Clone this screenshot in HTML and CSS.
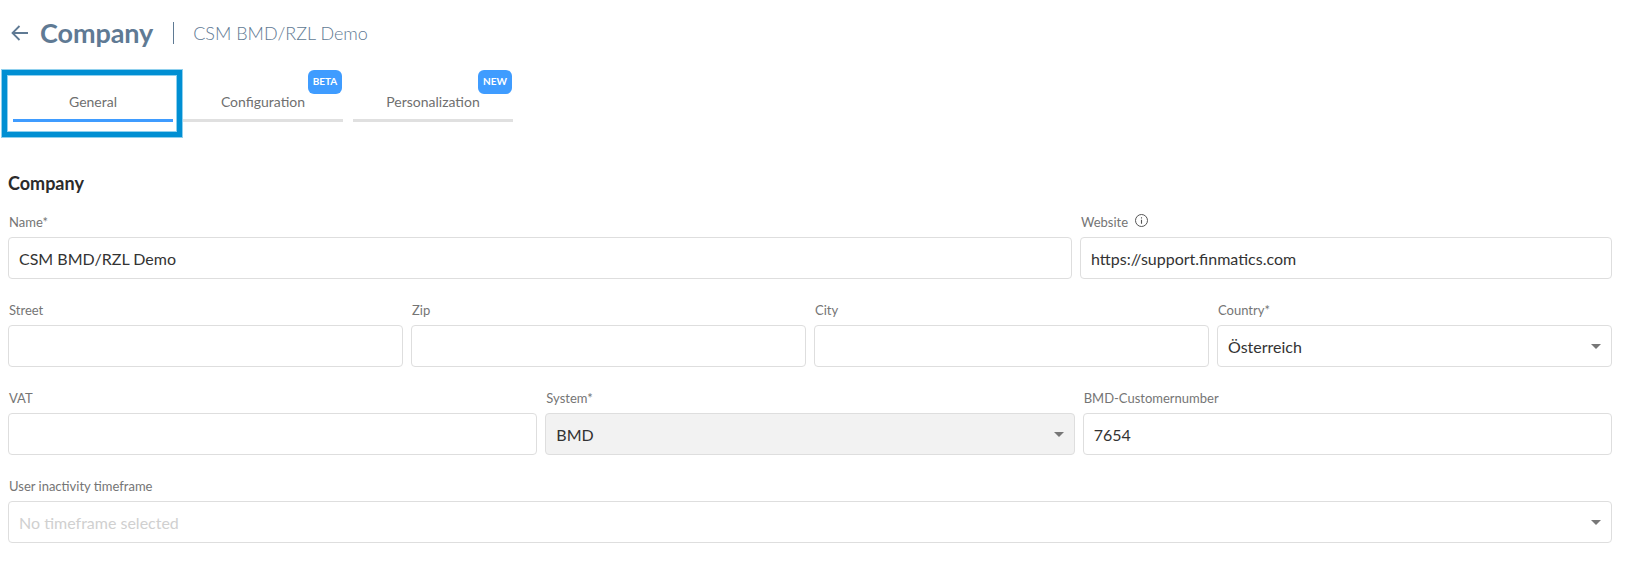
FILE: index.html
```html
<!DOCTYPE html>
<html lang="en">
<head>
<meta charset="utf-8">
<title>Company</title>
<link rel="stylesheet" href="styles.css">
</head>
<body>
<main class="page">
  <header class="head">
    <svg class="back" width="18" height="16" viewBox="0 0 18 16"><path d="M17 8H2M8.500 1 1.500 8l7 7" fill="none" stroke="#5f7a94" stroke-width="1.800"/></svg>
    <h1 class="title">Company</h1>
    <span class="divider"></span>
    <span class="subtitle">CSM BMD/RZL Demo</span>
  </header>
  <nav class="tabs">
    <div class="tab tab-active">General</div>
    <div class="tab">Configuration<span class="badge">BETA</span></div>
    <div class="tab">Personalization<span class="badge">NEW</span></div>
  </nav>
  <h2 class="section">Company</h2>
  <div class="row row-name">
    <div class="field"><label class="label">Name*</label><div class="input">CSM BMD/RZL Demo</div></div>
    <div class="field"><label class="label">Website <svg class="info" width="15" height="15" viewBox="0 0 15 15"><circle cx="7.500" cy="7.500" r="6" fill="none" stroke="#555" stroke-width="1"/><path d="M7.500 6.800v4M7.500 4.200v1.300" stroke="#555" stroke-width="1.100"/></svg></label><div class="input">https://support.finmatics.com</div></div>
  </div>
  <div class="row row-four">
    <div class="field"><label class="label">Street</label><div class="input"></div></div>
    <div class="field"><label class="label">Zip</label><div class="input"></div></div>
    <div class="field"><label class="label">City</label><div class="input"></div></div>
    <div class="field"><label class="label">Country*</label><div class="input select">Österreich</div></div>
  </div>
  <div class="row row-three">
    <div class="field"><label class="label">VAT</label><div class="input"></div></div>
    <div class="field"><label class="label">System*</label><div class="input select disabled">BMD</div></div>
    <div class="field"><label class="label">BMD-Customernumber</label><div class="input">7654</div></div>
  </div>
  <div class="row">
    <div class="field"><label class="label">User inactivity timeframe</label><div class="input select placeholder">No timeframe selected</div></div>
  </div>
</main>
</body>
</html>
```
FILE: styles.css
```css
* { box-sizing: border-box; }
html, body { margin: 0; background: #fff; }
body { font-family: Lato, "Noto Sans", sans-serif; color: #333; overflow: hidden; }
.page { padding: 0 24px 0 8px; height: 574px; }
.head { display: flex; align-items: center; height: 66px; padding-left: 3px; }
.back { margin-right: 11px; }
.title { margin: 0; font-size: 27px; font-weight: 700; color: #5f7a94; line-height: 34px; letter-spacing: -0.1px; }
.divider { width: 1px; height: 22px; background: #5f7a94; margin: 0 19px 0 20px; }
.subtitle { font-size: 18px; font-weight: 300; color: #5f7a94; }
.tabs { display: flex; gap: 10px; padding-left: 5px; margin-top: 15px; }
.tab { position: relative; width: 160px; height: 41px; padding-top: 12px; text-align: center; font-size: 14px; line-height: 18px; color: #6f6f6f; border-bottom: 3px solid #e0e0e0; }
.tab-active { border-bottom-color: #3f9cff; }
.tab-active::after { content: ""; position: absolute; left: -11px; right: -9px; top: -11px; bottom: -18px; border: 5px solid #008fd3; box-shadow: 0 0 0 1px #8fd0ee, inset 0 0 0 1px #8fd0ee; }
.badge { position: absolute; right: 1px; top: -11px; width: 34px; height: 24px; border-radius: 6px; background: #3f9cff; color: #fff; font-size: 10px; font-weight: 700; line-height: 23px; text-align: center; }
.section { margin: 49px 0 0; font-size: 18px; font-weight: 700; line-height: 24px; color: #2b2b2b; }
.row { display: grid; gap: 8px; margin-bottom: 22px; }
.row-name { grid-template-columns: 2fr 1fr; margin-top: 18px; }
.row-four { grid-template-columns: repeat(4, 1fr); }
.row-three { grid-template-columns: repeat(3, 1fr); }
.label { display: block; height: 24px; padding-left: 1px; font-size: 13px; line-height: 18px; color: #757575; white-space: nowrap; }
.info { vertical-align: -1px; margin-left: 3px; }
.input { position: relative; height: 42px; padding: 0 10px; border: 1px solid #dedede; border-radius: 4px; background: #fff; font-size: 16px; line-height: 41px; color: #333; }
.select::after { content: ""; position: absolute; right: 10px; top: 18px; border-left: 5px solid transparent; border-right: 5px solid transparent; border-top: 5px solid #777; }
.disabled { background: #f2f2f2; }
.placeholder { color: #d0d0d0; }
```
